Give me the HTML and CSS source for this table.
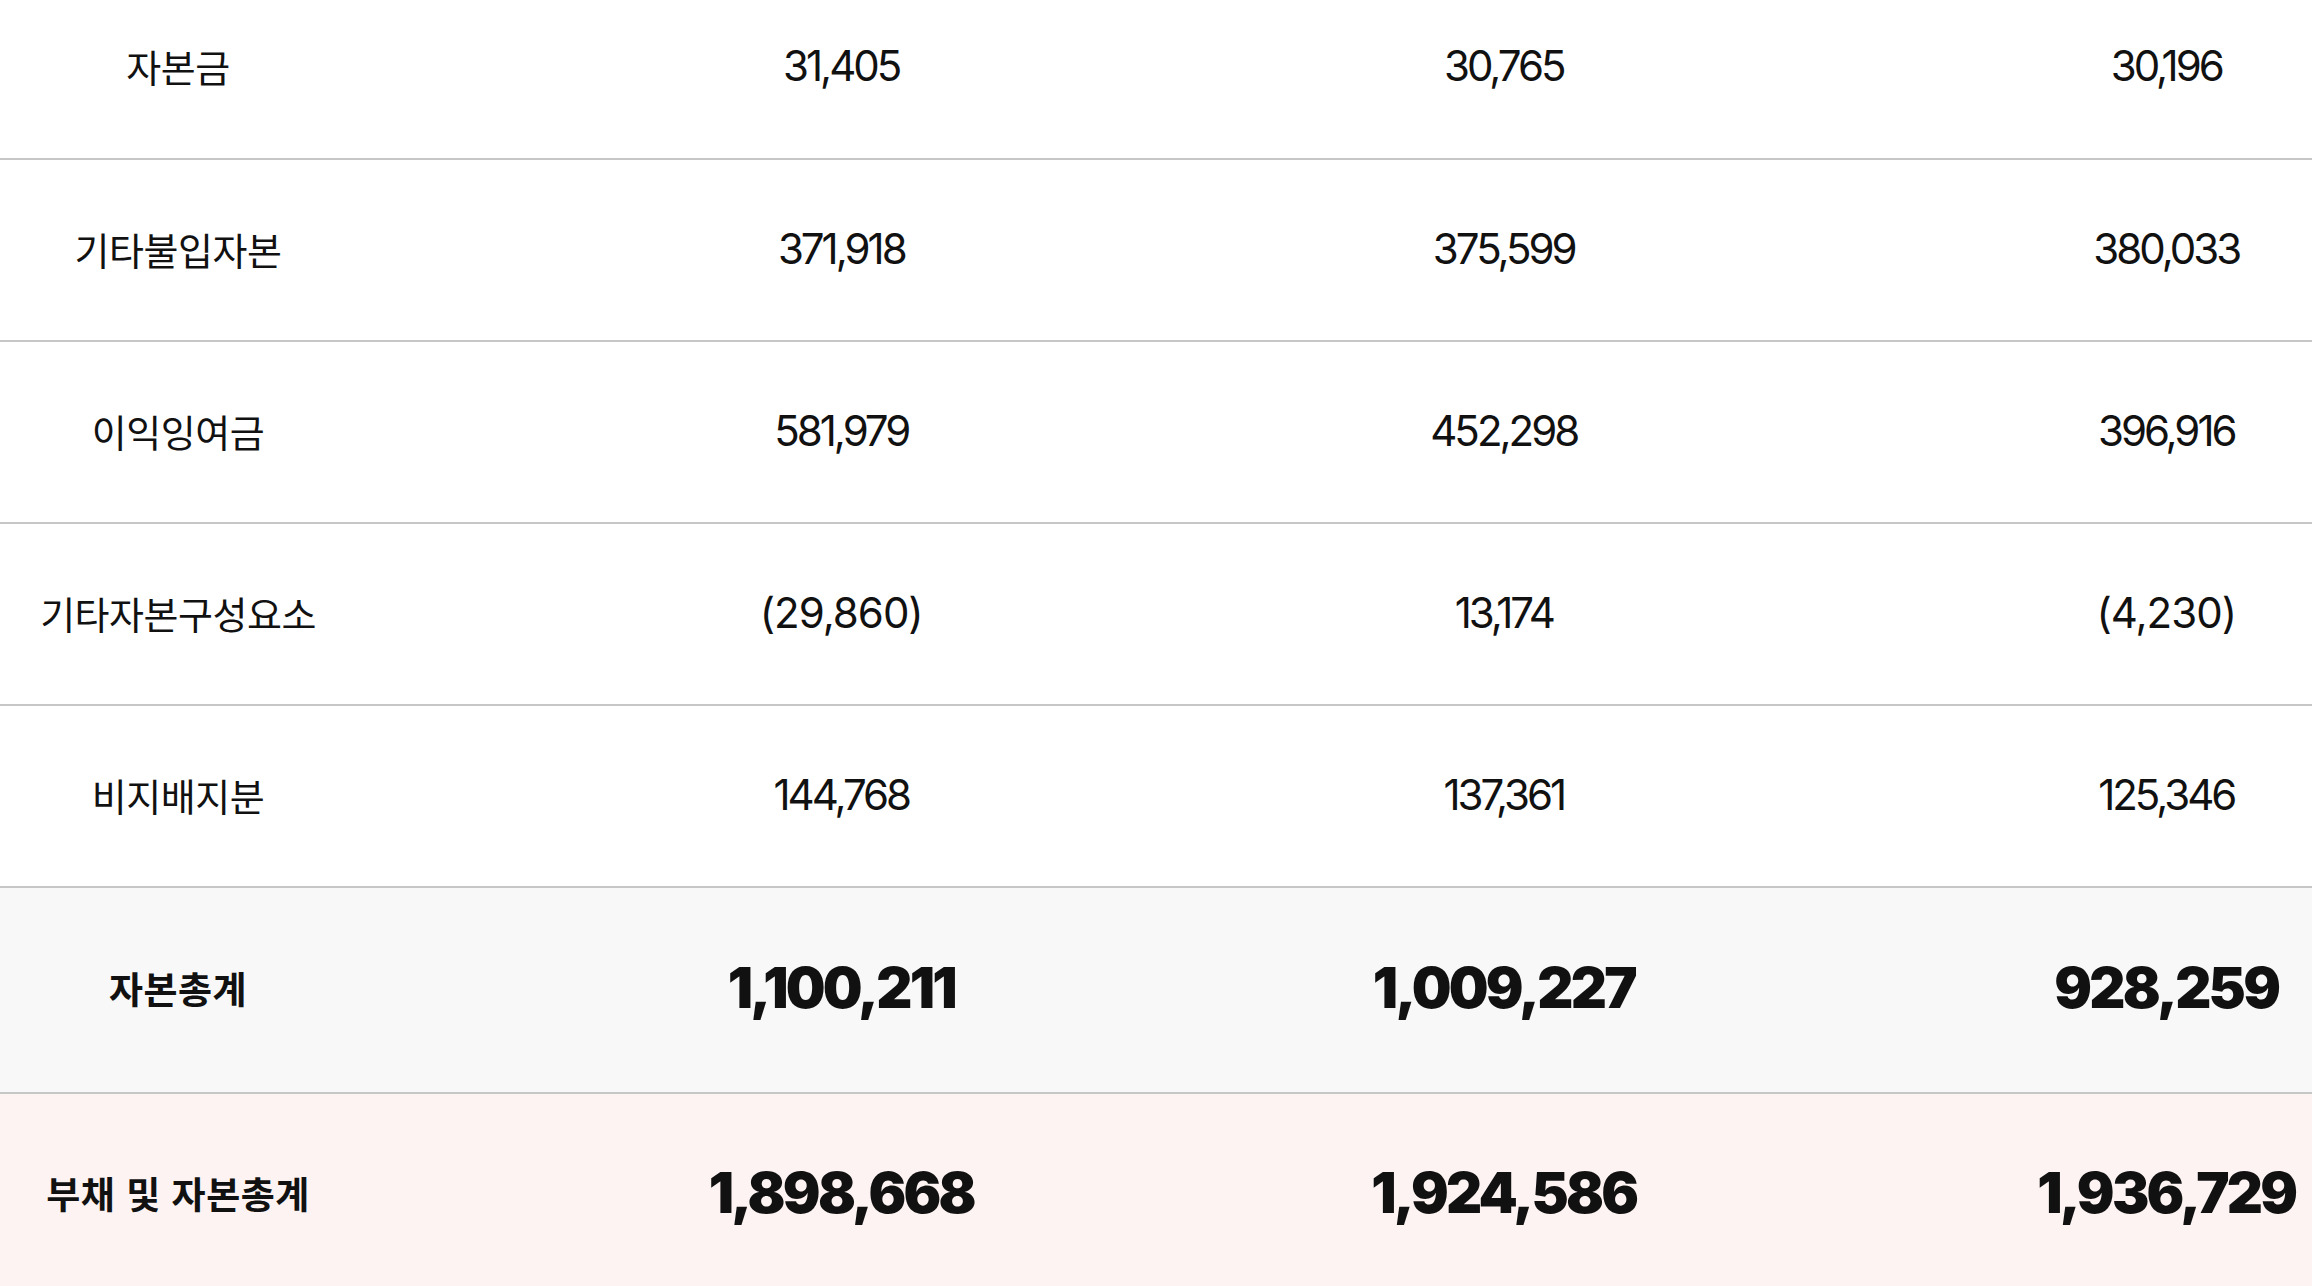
FILE: index.html
```html
<!DOCTYPE html>
<html lang="ko">
<head>
<meta charset="utf-8">
<title>자본 현황</title>
<link rel="stylesheet" href="styles.css">
</head>
<body>
<div class="sheet">
  <div class="row first">
    <div class="label">자본금</div>
    <div class="num">31,405</div>
    <div class="num">30,765</div>
    <div class="num">30,196</div>
  </div>
  <div class="row">
    <div class="label">기타불입자본</div>
    <div class="num">371,918</div>
    <div class="num">375,599</div>
    <div class="num">380,033</div>
  </div>
  <div class="row">
    <div class="label">이익잉여금</div>
    <div class="num">581,979</div>
    <div class="num">452,298</div>
    <div class="num">396,916</div>
  </div>
  <div class="row">
    <div class="label">기타자본구성요소</div>
    <div class="num neg">(29,860)</div>
    <div class="num">13,174</div>
    <div class="num neg">(4,230)</div>
  </div>
  <div class="row">
    <div class="label">비지배지분</div>
    <div class="num">144,768</div>
    <div class="num">137,361</div>
    <div class="num">125,346</div>
  </div>
  <div class="row total">
    <div class="label">자본총계</div>
    <div class="num">1,100,211</div>
    <div class="num">1,009,227</div>
    <div class="num">928,259</div>
  </div>
  <div class="row grand">
    <div class="label">부채 및 자본총계</div>
    <div class="num">1,898,668</div>
    <div class="num">1,924,586</div>
    <div class="num">1,936,729</div>
  </div>
</div>
</body>
</html>
```

FILE: styles.css
```css
html, body {
  margin: 0;
  padding: 0;
  background: #ffffff;
}

body {
  overflow: hidden;
  color: #111111;
  font-family: "Noto Sans CJK KR", "Noto Sans", sans-serif;
}

.sheet {
  width: 2312px;
  overflow: hidden;
}

.row {
  display: grid;
  grid-template-columns: 510px 662.5px 662.5px 662.5px;
  align-items: center;
  height: 182px;
  box-sizing: border-box;
  padding-bottom: 4px;
  border-bottom: 2px solid #c6c6c6;
}

.row.first {
  height: 160px;
  padding-bottom: 27px;
}

.row.total {
  height: 206px;
  padding-bottom: 4px;
  background: #f8f8f8;
}

.row.grand {
  height: 206px;
  padding-bottom: 8px;
  background: #fcf3f2;
  border-bottom: none;
}

.label {
  padding-right: 154px;
  text-align: center;
  font-family: "Noto Sans CJK KR", sans-serif;
  font-size: 38px;
  letter-spacing: -0.5px;
  font-weight: 400;
  white-space: nowrap;
}

.num {
  text-align: center;
  font-family: Inter, "Noto Sans", sans-serif;
  font-size: 42px;
  font-weight: 400;
  letter-spacing: -3px;
  white-space: nowrap;
}

.num.neg {
  letter-spacing: -1px;
}

.total .label,
.grand .label {
  font-size: 37px;
  font-weight: 700;
  letter-spacing: 0.5px;
}

.total .num,
.grand .num {
  font-size: 56px;
  font-weight: 900;
  letter-spacing: -2.75px;
}
```
